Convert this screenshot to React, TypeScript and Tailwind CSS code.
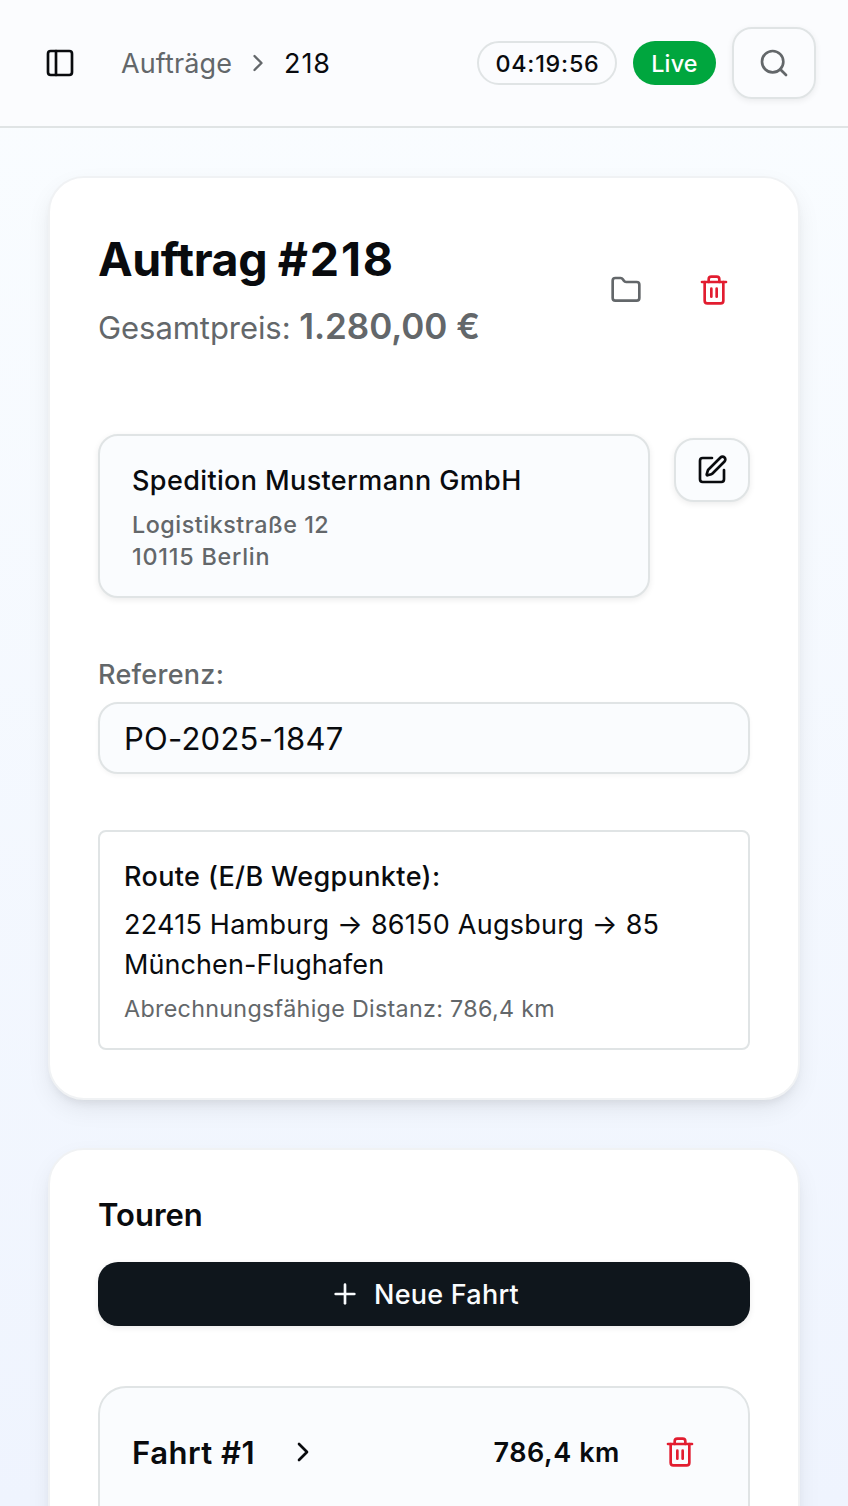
import {
  ChevronRight,
  Folder,
  PanelLeft,
  Plus,
  Search,
  SquarePen,
  Trash2,
} from 'lucide-react';
import React from 'react';

interface Tour {
  name: string;
  distance: string;
}

const TOURS: Tour[] = [{ name: 'Fahrt #1', distance: '786,4 km' }];

const App: React.FC = () => {
  return (
    <div className="h-[1506px] w-full overflow-hidden bg-linear-to-b from-[#fafdff] to-[#eff4fe] font-[Inter,'Liberation_Sans',sans-serif] text-[#090b0e]">
      <Header />
      <main className="flex flex-col gap-12 px-12 pt-12">
        <OrderCard />
        <ToursCard />
      </main>
    </div>
  );
};

export default App;

const Header: React.FC = () => {
  return (
    <header className="flex h-32 items-center border-b-2 border-[#e0e4e5] bg-[#fbfcfe] pl-11 pr-8">
      <button aria-label="Menü">
        <PanelLeft className="size-8" />
      </button>
      <nav className="ml-[45px] flex items-center gap-3 pt-px text-[27px] leading-10">
        <span className="tracking-[0.004em] text-[#63676a]">Aufträge</span>
        <ChevronRight className="-mt-0.5 size-7 text-[#63676a]" />
        <span className="tracking-[0.035em]">218</span>
      </nav>
      <div className="ml-auto flex items-center gap-4">
        <span className="flex h-11 w-[140px] items-center justify-center rounded-full border-2 border-[#e0e4e5] pl-px pt-0.5 text-[23.3px] font-medium tracking-[0.033em]">
          04:19:56
        </span>
        <span className="flex h-11 w-[83px] items-center justify-center rounded-full bg-[#00a63e] pt-0.5 text-[23.3px] font-medium tracking-[0.01em] text-white">
          Live
        </span>
        <button
          aria-label="Suchen"
          className="flex h-[72px] w-[84px] items-center justify-center rounded-[20px] border-2 border-[#e0e4e5] text-[#63676a] shadow-[0_2px_6px_rgb(0_0_0/0.07)]"
        >
          <Search className="size-8" />
        </button>
      </div>
    </header>
  );
};

const Card: React.FC<{ children: React.ReactNode }> = ({ children }) => {
  return (
    <section className="rounded-[36px] border-2 border-[#f0f2f4] bg-white p-12 shadow-[0_10px_24px_-2px_rgb(0_0_0/0.08),0_6px_10px_-4px_rgb(0_0_0/0.08)]">
      {children}
    </section>
  );
};

const OrderCard: React.FC = () => {
  return (
    <Card>
      <div className="flex h-32 items-center justify-between">
        <div>
          <h1 className="text-[46.5px] font-bold leading-[66px] tracking-[-0.009em]">
            Auftrag <span className="tracking-[0.04em]">#218</span>
          </h1>
          <p className="mt-1.5 h-14 text-[31px] leading-14 tracking-[-0.002em] text-[#63676a]">
            Gesamtpreis:{' '}
            <span className="text-[35px] font-semibold">1.280,00 €</span>
          </p>
        </div>
        <div className="flex gap-4">
          <IconButton label="Ordner" className="text-[#63676a]">
            <Folder className="size-8" />
          </IconButton>
          <IconButton label="Auftrag löschen" className="text-[#e21d30]">
            <Trash2 className="size-8" />
          </IconButton>
        </div>
      </div>

      <div className="mt-20 flex items-start gap-6">
        <address className="flex-1 rounded-[20px] border-2 border-[#e0e4e5] bg-[#fafcfe] px-8 pb-[23px] pt-[25px] not-italic shadow-[0_2px_6px_rgb(0_0_0/0.08)]">
          <p className="text-[27px] font-medium leading-10 tracking-[0.014em]">
            Spedition Mustermann GmbH
          </p>
          <p className="mt-2 text-[23.3px] font-medium leading-8 tracking-[0.023em] text-[#63676a]">
            Logistikstraße 12
            <br />
            <span className="tracking-[0.034em]">10115 Berlin</span>
          </p>
        </address>
        <button
          aria-label="Bearbeiten"
          className="mt-1 flex h-16 w-19 items-center justify-center rounded-[20px] border-2 border-[#e0e4e5] bg-[#fafcfe] shadow-[0_2px_6px_rgb(0_0_0/0.08)]"
        >
          <SquarePen className="size-8" />
        </button>
      </div>

      <div className="mt-[57px]">
        <label
          htmlFor="reference"
          className="block text-[27px] font-medium leading-10 tracking-[0.01em] text-[#63676a]"
        >
          Referenz:
        </label>
        <input
          id="reference"
          defaultValue="PO-2025-1847"
          className="mt-[7px] block h-[72px] w-full rounded-[20px] border-2 border-[#e0e4e5] bg-[#fafcfe] px-6 text-[31px] tracking-[0.008em] shadow-[0_2px_4px_rgb(0_0_0/0.04)]"
        />
      </div>

      <div className="mt-14 rounded-lg border-2 border-[#e0e4e5] px-6 pb-[23px] pt-[25px]">
        <h2 className="text-[27px] font-medium leading-10 tracking-[0.014em]">
          Route (E/B Wegpunkte):
        </h2>
        <p className="mt-2 text-[27px] leading-10 tracking-[0.009em]">
          22415 Hamburg → 86150 Augsburg → 85{' '}
          <span className="tracking-[0.003em]">München-Flughafen</span>
        </p>
        <p className="mt-2 text-[23.3px] leading-8 tracking-[0.013em] text-[#63676a]">
          Abrechnungsfähige Distanz: 786,4 km
        </p>
      </div>
    </Card>
  );
};

const ToursCard: React.FC = () => {
  return (
    <Card>
      <h2 className="pt-px text-[31px] font-semibold leading-[31px]">Touren</h2>
      <button className="mt-8 flex h-16 w-full items-center justify-center gap-[13px] rounded-[20px] bg-[#0f161c] text-[27px] font-medium tracking-[0.009em] text-[#fafcfe] shadow-[0_2px_6px_rgb(0_0_0/0.08)]">
        <Plus className="size-8" />
        <span className="pt-0.5">Neue Fahrt</span>
      </button>
      <div className="mt-15 flex flex-col gap-8">
        {TOURS.map((tour) => (
          <TourItem key={tour.name} {...tour} />
        ))}
      </div>
    </Card>
  );
};

const TourItem: React.FC<Tour> = ({ name, distance }) => {
  return (
    <div className="h-60 rounded-[28px] border-2 border-[#e0e4e5] bg-[#fafcfe] p-8">
      <div className="flex h-16 items-center">
        <h3 className="pt-0.5 text-[31px] font-semibold tracking-[0.016em]">{name}</h3>
        <ChevronRight className="ml-8 size-8" />
        <span className="ml-auto mr-6 pt-0.5 text-[27px] font-semibold tracking-[0.021em]">
          {distance}
        </span>
        <IconButton label="Fahrt löschen" className="text-[#e21d30]">
          <Trash2 className="size-8" />
        </IconButton>
      </div>
    </div>
  );
};

const IconButton: React.FC<{
  label: string;
  className: string;
  children: React.ReactNode;
}> = ({ label, className, children }) => {
  return (
    <button
      aria-label={label}
      className={`flex h-16 w-18 items-center justify-center ${className}`}
    >
      {children}
    </button>
  );
};
